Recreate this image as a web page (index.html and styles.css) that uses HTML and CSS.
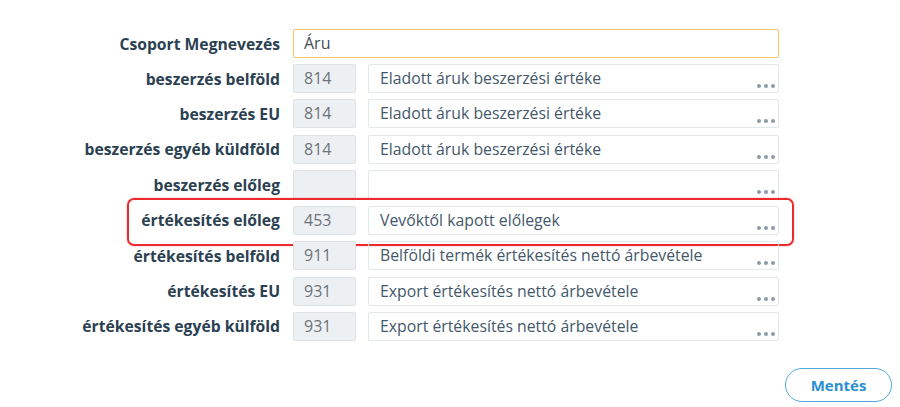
FILE: index.html
```
<!DOCTYPE html>
<html lang="hu">
<head>
<meta charset="utf-8">
<link rel="stylesheet" href="styles.css">
</head>
<body>
<div class="form">
  <div class="row">
    <label class="lbl">Csoport Megnevezés</label>
    <div class="name-input">Áru</div>
  </div>
  <div class="rows">
    <div class="row">
      <label class="lbl">beszerzés belföld</label>
      <div class="code">814</div>
      <div class="desc">Eladott áruk beszerzési értéke<span class="dots"><i></i><i></i><i></i></span></div>
    </div>
    <div class="row">
      <label class="lbl">beszerzés EU</label>
      <div class="code">814</div>
      <div class="desc">Eladott áruk beszerzési értéke<span class="dots"><i></i><i></i><i></i></span></div>
    </div>
    <div class="row">
      <label class="lbl">beszerzés egyéb küldföld</label>
      <div class="code">814</div>
      <div class="desc">Eladott áruk beszerzési értéke<span class="dots"><i></i><i></i><i></i></span></div>
    </div>
    <div class="row">
      <label class="lbl">beszerzés előleg</label>
      <div class="code"></div>
      <div class="desc"><span class="dots"><i></i><i></i><i></i></span></div>
    </div>
    <div class="row highlight">
      <label class="lbl">értékesítés előleg</label>
      <div class="code">453</div>
      <div class="desc">Vevőktől kapott előlegek<span class="dots"><i></i><i></i><i></i></span></div>
    </div>
    <div class="row">
      <label class="lbl">értékesítés belföld</label>
      <div class="code">911</div>
      <div class="desc">Belföldi termék értékesítés nettó árbevétele<span class="dots"><i></i><i></i><i></i></span></div>
    </div>
    <div class="row">
      <label class="lbl">értékesítés EU</label>
      <div class="code">931</div>
      <div class="desc">Export értékesítés nettó árbevétele<span class="dots"><i></i><i></i><i></i></span></div>
    </div>
    <div class="row">
      <label class="lbl">értékesítés egyéb külföld</label>
      <div class="code">931</div>
      <div class="desc">Export értékesítés nettó árbevétele<span class="dots"><i></i><i></i><i></i></span></div>
    </div>
  </div>
  <div class="footer">
    <button class="save">Mentés</button>
  </div>
</div>
</body>
</html>
```

FILE: styles.css
```
* { box-sizing: border-box; }
html, body { margin: 0; padding: 0; background: #fff; }
body {
  font-family: "Open Sans", "Noto Sans", sans-serif;
  width: 900px;
  height: 407px;
  overflow: hidden;
}
.form {
  padding-top: 29px;
}
.rows {
  display: flex;
  flex-direction: column;
  gap: 6.43px;
  margin-top: 6px;
}
.row {
  display: flex;
  align-items: center;
  position: relative;
  height: 29px;
}
.lbl {
  width: 280px;
  text-align: right;
  font-weight: 700;
  font-size: 15.7px;
  color: #2b4152;
  margin-right: 13px;
  white-space: nowrap;
}
.name-input {
  width: 486px;
  height: 29px;
  border: 1px solid #f7c46a;
  border-radius: 2px;
  padding: 0 10px;
  font-size: 16px;
  line-height: 27px;
  color: #474d54;
}
.code {
  width: 63px;
  height: 29px;
  background: #edf0f3;
  border: 1px solid #dde2e7;
  border-radius: 2px;
  padding: 0 10px;
  font-size: 16px;
  line-height: 27px;
  color: #6d737a;
  margin-right: 12px;
}
.desc {
  position: relative;
  width: 411px;
  height: 29px;
  border: 1px solid #e2e7ec;
  border-radius: 2px;
  padding: 0 11px;
  font-size: 15.8px;
  line-height: 27px;
  color: #44586a;
  white-space: nowrap;
}
.dots {
  position: absolute;
  right: 3px;
  bottom: 4px;
  display: flex;
  gap: 3px;
}
.dots i {
  display: block;
  width: 4px;
  height: 4px;
  border-radius: 50%;
  background: #8d9aab;
}
.highlight::before {
  content: "";
  position: absolute;
  left: 127px;
  top: -8px;
  width: 663px;
  height: 44px;
  border: 2px solid #ec2a2d;
  border-radius: 7px;
  box-shadow: 0 0 2px rgba(236, 42, 45, 0.4);
  pointer-events: none;
}
.footer {
  display: flex;
  justify-content: flex-end;
  padding-right: 8px;
  margin-top: 27px;
}
.save {
  width: 107px;
  height: 34px;
  border: 1.5px solid #52a9dd;
  border-radius: 17px;
  background: #fff;
  color: #2a8fd0;
  font-family: "Open Sans", "Noto Sans", sans-serif;
  font-weight: 700;
  font-size: 15px;
  padding: 0;
}
```
